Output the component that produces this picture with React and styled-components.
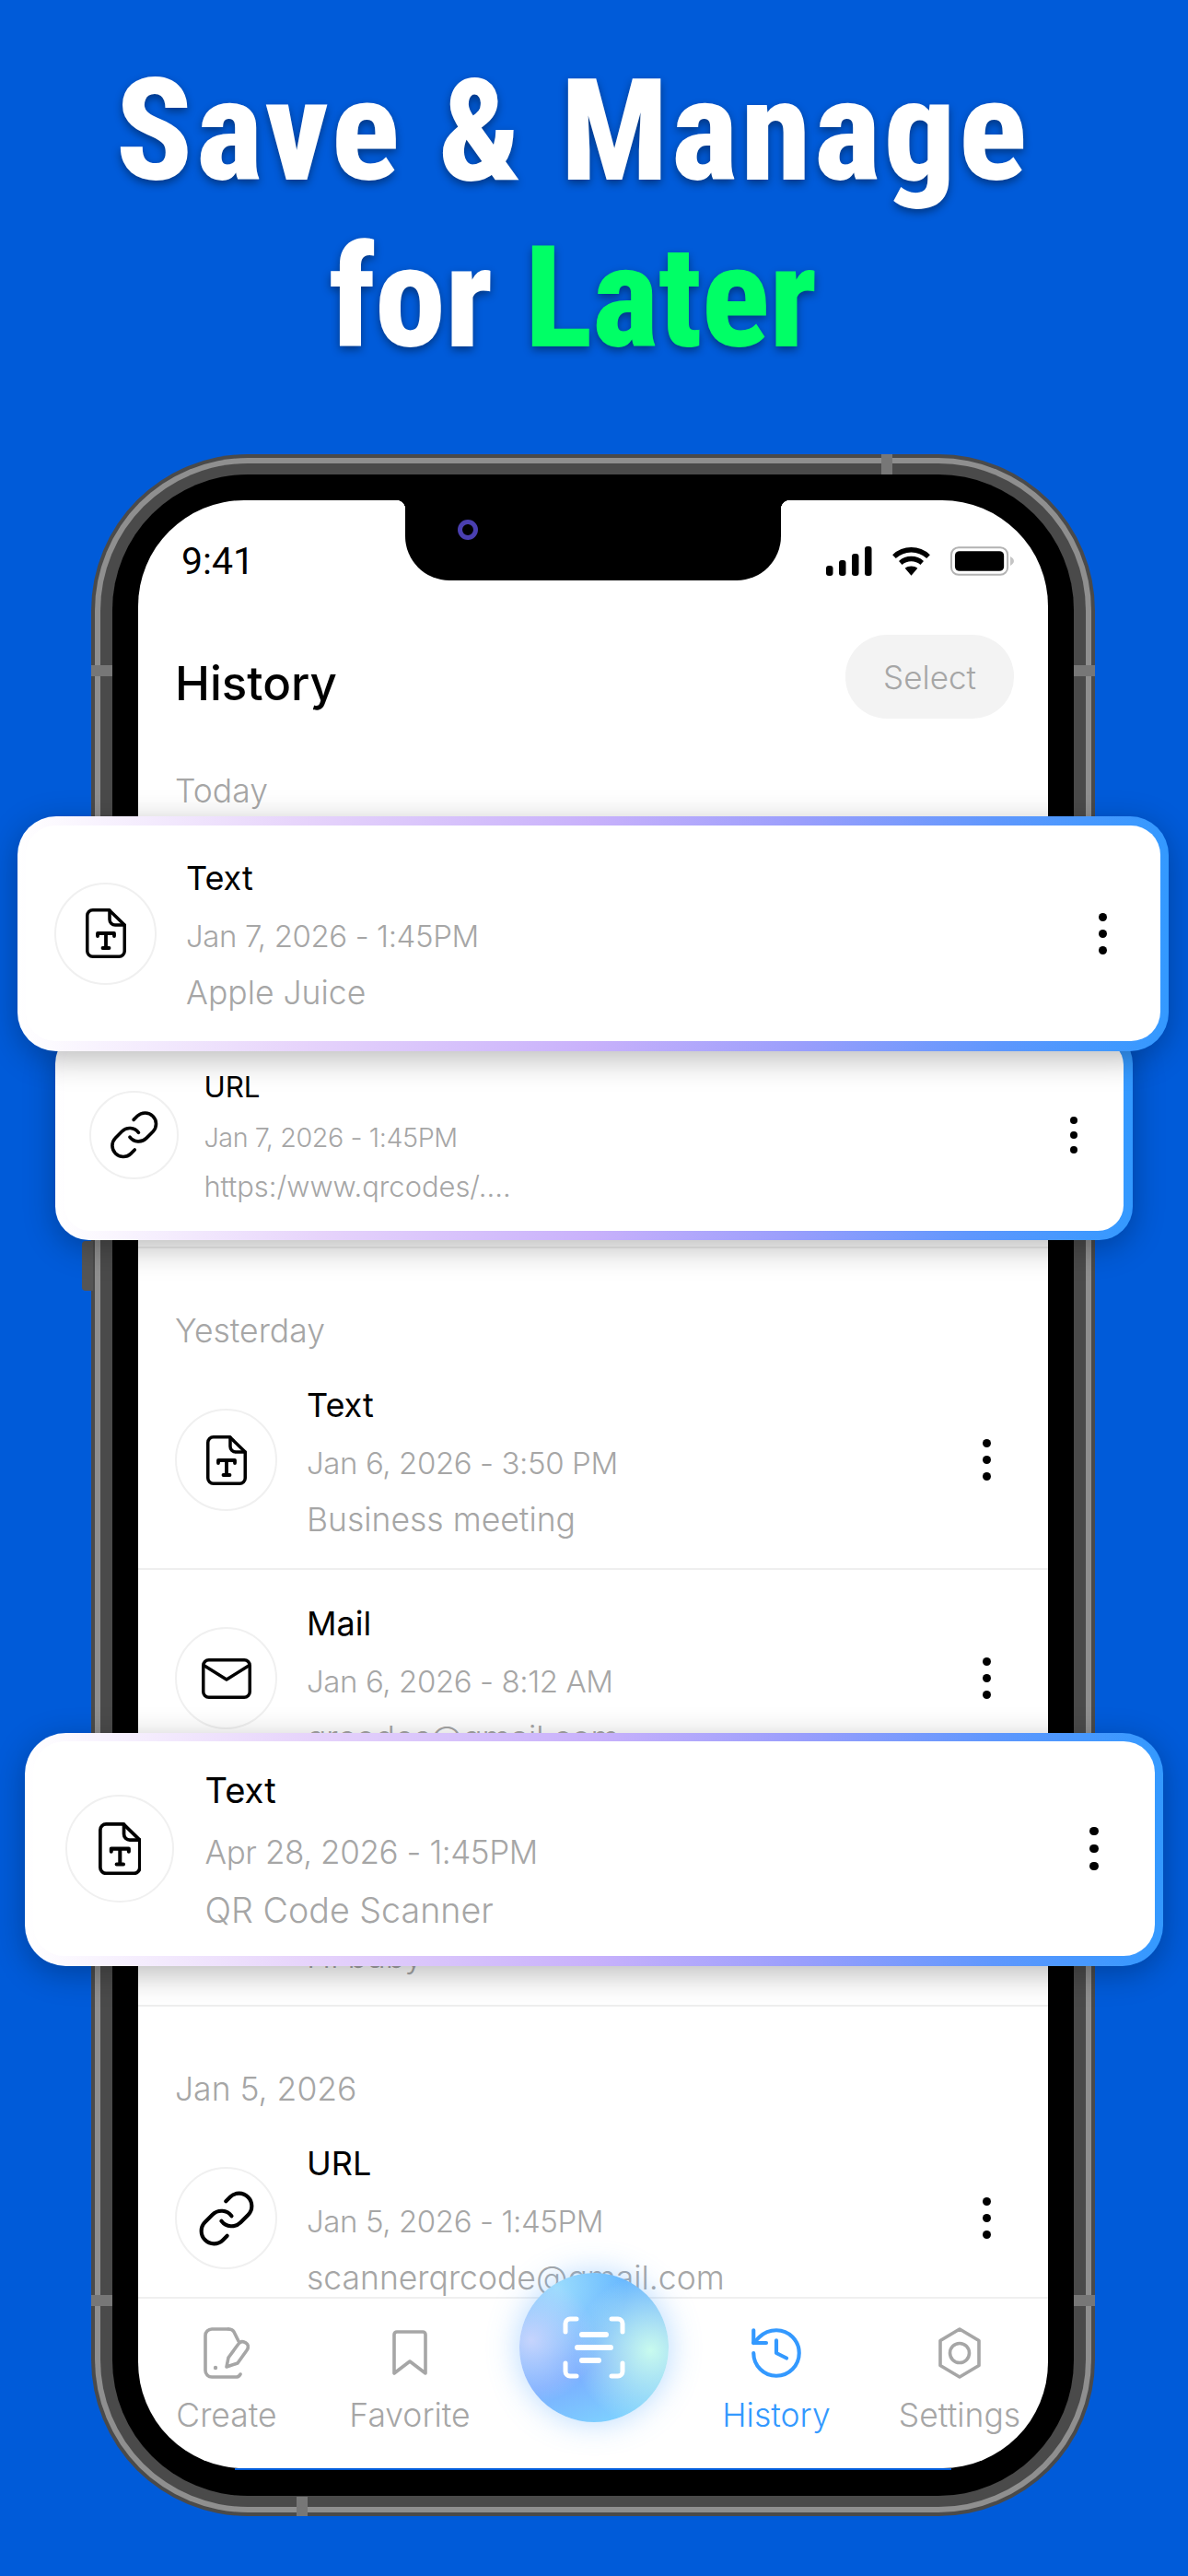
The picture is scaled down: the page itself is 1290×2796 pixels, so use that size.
import React from 'react';
import styled, { createGlobalStyle } from 'styled-components';
import { History, Link as LinkIcon } from 'lucide-react';

const BLUE = '#005bd9';
const GREY = '#a6a6a6';
const ACCENT = '#3399ff';
const BORDER_GRADIENT = 'linear-gradient(90deg, #fff 0%, #e6d3fb 25%, #c8b1fb 50%, #9a9efc 68%, #5f97fd 85%, #3399ff 100%)';

const GlobalStyle = createGlobalStyle`
	html, body {
		margin: 0;
		padding: 0;
		background: ${BLUE};
	}
	* {
		box-sizing: border-box;
	}
`;

const FileIcon = ({ s = 1 }) => (
	<svg width={44 * s} height={54 * s} viewBox="0 0 44 54" fill="none" stroke="#000" strokeWidth="3.5" strokeLinecap="round" strokeLinejoin="round">
		<path d="M8 1.750h17.500L42.250 18v28.250a6 6 0 0 1-6 6H7.750a6 6 0 0 1-6-6V7.750a6 6 0 0 1 6-6z" />
		<path d="M26 2v10a6 6 0 0 0 6 6h10" />
		<path d="M13 30v-3h18v3M22 27v16M18.500 43h7" strokeWidth="3.8" />
	</svg>
);

const MailIcon = ({ s = 1 }) => (
	<svg width={54 * s} height={44 * s} viewBox="0 0 54 44" fill="none" stroke="#000" strokeWidth="3.5" strokeLinecap="round" strokeLinejoin="round">
		<rect x="1.750" y="1.750" width="50.500" height="40.500" rx="6" />
		<path d="M3 8l24 15L51 8" />
	</svg>
);

const ChainIcon = ({ s = 1 }) => <LinkIcon size={66 * s} strokeWidth={1.5} color="#000" />;

const iconFor = { text: FileIcon, mail: MailIcon, url: ChainIcon };

const CreateIcon = () => (
	<svg width="50" height="56" viewBox="0 0 50 56" fill="none" stroke={GREY} strokeWidth="3.6" strokeLinecap="round" strokeLinejoin="round">
		<path d="M27 2H9a7 7 0 0 0-7 7v38a7 7 0 0 0 7 7h27a5 5 0 0 0 4-3" />
		<path d="M27 2c3 0 5 1 6 3l5 10" />
		<path d="M25 43l2-10 11-15c2-3 5-3 8-1s3 5 1 8L37 39z" />
		<path d="M13 44v.1" strokeWidth="4.4" />
	</svg>
);

const BookmarkIcon = () => (
	<svg width="38" height="50" viewBox="0 0 38 50" fill="none" stroke={GREY} strokeWidth="3.6" strokeLinejoin="round">
		<path d="M5 2h28a3 3 0 0 1 3 3v42L19 34 2 47V5a3 3 0 0 1 3-3z" />
	</svg>
);

const HexIcon = () => (
	<svg width="50" height="56" viewBox="0 0 50 56" fill="none" stroke={GREY} strokeWidth="3.6" strokeLinejoin="round">
		<path d="M25 2l21 12.500v27L25 54 4 41.500v-27z" />
		<circle cx="25" cy="28" r="10.500" />
	</svg>
);

const ScanIcon = () => (
	<svg width="68" height="68" viewBox="0 0 68 68" fill="none" stroke="#fff" strokeWidth="5" strokeLinecap="round" strokeLinejoin="round">
		<path d="M3 17V8a5 5 0 0 1 5-5h7M53 3h7a5 5 0 0 1 5 5v9M65 51v9a5 5 0 0 1-5 5h-7M15 65H8a5 5 0 0 1-5-5v-9" />
		<path d="M21 20h26M16 34h36M21 48h18" strokeWidth="6" />
	</svg>
);

const SignalIcon = () => (
	<svg width="50" height="32" viewBox="0 0 50 32" fill="#000">
		<rect x="0" y="21" width="7.500" height="11" rx="3" />
		<rect x="14" y="15" width="7.500" height="17" rx="3" />
		<rect x="28" y="8" width="7.500" height="24" rx="3" />
		<rect x="42" y="0" width="7.500" height="32" rx="3" />
	</svg>
);

const WifiIcon = () => (
	<svg width="43" height="32" viewBox="0 0 44 32" fill="none" stroke="#000" strokeWidth="5.500">
		<path d="M3 11c11-10 27-10 38 0" />
		<path d="M10 18c7-6 17-6 24 0" />
		<path d="M22 32l-7-8c4-3 10-3 14 0z" fill="#000" stroke="none" />
	</svg>
);

const BatteryIcon = () => (
	<svg width="69" height="32" viewBox="0 0 70 32">
		<rect x="1" y="1" width="62" height="30" rx="8" fill="none" stroke="#b3b3b3" strokeWidth="2" />
		<rect x="5" y="5" width="54" height="22" rx="5" fill="#000" />
		<path d="M66 11c2 1 4 3 4 5s-2 4-4 5z" fill="#c4c4c4" />
	</svg>
);

const Entry = ({ kind, title, date, sub, s = 1 }) => {
	const Icon = iconFor[kind];
	return (
		<>
			<IconCircle $s={s}>
				<Icon s={s} />
			</IconCircle>
			<EntryText $s={s}>
				<EntryTitle $s={s}>{title}</EntryTitle>
				<EntryDate $s={s}>{date}</EntryDate>
				<EntrySub $s={s}>{sub}</EntrySub>
			</EntryText>
			<Kebab $s={s}>
				<i />
				<i />
				<i />
			</Kebab>
		</>
	);
};

const SECTIONS = [
	{
		label: 'Today',
		rows: [
			{ kind: 'text', title: 'Text', date: 'Jan 7, 2026 - 1:45PM', sub: 'Apple Juice' },
			{ kind: 'url', title: 'URL', date: 'Jan 7, 2026 - 1:45PM', sub: 'https:/www.qrcodes/....' },
		],
	},
	{
		label: 'Yesterday',
		rows: [
			{ kind: 'text', title: 'Text', date: 'Jan 6, 2026 - 3:50 PM', sub: 'Business meeting' },
			{ kind: 'mail', title: 'Mail', date: 'Jan 6, 2026 - 8:12 AM', sub: 'qrcodes@gmail.com' },
			{ kind: 'text', title: 'Text', date: 'Jan 6, 2026 - 6:30 AM', sub: 'Hi baby' },
		],
	},
	{
		label: 'Jan 5, 2026',
		rows: [{ kind: 'url', title: 'URL', date: 'Jan 5, 2026 - 1:45PM', sub: 'scannerqrcode@gmail.com' }],
	},
];

const TABS = [
	{ label: 'Create', icon: <CreateIcon /> },
	{ label: 'Favorite', icon: <BookmarkIcon /> },
	{ label: '', icon: null },
	{ label: 'History', icon: <History size={66} strokeWidth={1.5} color={ACCENT} />, active: true },
	{ label: 'Settings', icon: <HexIcon /> },
];

export default function App() {
	return (
		<Page>
			<GlobalStyle />
			<Headline>
				<HeadLine $spacing={3.4}>Save &amp; Manage</HeadLine>
				<HeadLine $spacing={-0.5}>
					for <Green>Later</Green>
				</HeadLine>
			</Headline>
			<Stage>
				<SideButton />
				<Shell>
					<Stripe>
						<Rim>
							<Bezel>
								<Screen>
									<Notch>
										<Camera />
									</Notch>
									<StatusBar>
										<Clock>9:41</Clock>
										<StatusIcons>
											<SignalIcon />
											<WifiIcon />
											<BatteryIcon />
										</StatusIcons>
									</StatusBar>
									<TitleRow>
										<PageTitle>History</PageTitle>
										<SelectButton>Select</SelectButton>
									</TitleRow>
									<List>
										{SECTIONS.map(section => (
											<Section key={section.label}>
												<SectionLabel>{section.label}</SectionLabel>
												{section.rows.map((row, i) => (
													<Row key={i}>
														<Entry {...row} />
													</Row>
												))}
											</Section>
										))}
									</List>
									<TabBar>
										{TABS.map((tab, i) => (
											<Tab key={i} $active={tab.active}>
												<TabIcon>{tab.icon}</TabIcon>
												{tab.label}
											</Tab>
										))}
										<ScanButton>
											<ScanIcon />
										</ScanButton>
									</TabBar>
								</Screen>
							</Bezel>
						</Rim>
					</Stripe>
				</Shell>
				<FrameMark $x={858} $y={0} $w={12} $h={22} />
				<FrameMark $x={0} $y={229} $w={23} $h={12} />
				<FrameMark $x={1067} $y={229} $w={23} $h={12} />
				<FrameMark $x={0} $y={1998} $w={23} $h={12} />
				<FrameMark $x={1067} $y={1998} $w={23} $h={12} />
				<FrameMark $x={223} $y={2217} $w={12} $h={21} />

				<FloatCard $left={-39} $top={625} $width={1170} $height={228} $pad="10px" $s={0.87}>
					<CardInner $s={0.87} $left={27}>
						<Entry kind="url" title="URL" date="Jan 7, 2026 - 1:45PM" sub="https:/www.qrcodes/...." s={0.87} />
					</CardInner>
				</FloatCard>
				<FloatCard $left={-80} $top={393} $width={1250} $height={255} $pad="10px 9px 11px 9px" $s={1}>
					<CardInner $s={1} $left={31}>
						<Entry kind="text" title="Text" date="Jan 7, 2026 - 1:45PM" sub="Apple Juice" />
					</CardInner>
				</FloatCard>
				<FloatCard $left={-72} $top={1388} $width={1236} $height={253} $pad="9px 9px 11px 9px" $s={1.06}>
					<CardInner $s={1.06} $left={35}>
						<Entry kind="text" title="Text" date="Apr 28, 2026 - 1:45PM" sub="QR Code Scanner" s={1.06} />
					</CardInner>
				</FloatCard>
			</Stage>
		</Page>
	);
}

const Page = styled.div`
	width: 1290px;
	height: 2796px;
	overflow: hidden;
	background: ${BLUE};
	font-family: 'Inter', 'Liberation Sans', sans-serif;
`;

const Headline = styled.h1`
	margin: 0;
	height: 493px;
	padding: 52px 46px 0 0;
	display: flex;
	flex-direction: column;
	align-items: center;
	font-family: 'Roboto', 'Liberation Sans', sans-serif;
	font-stretch: 75%;
	font-weight: 800;
	font-size: 154px;
	line-height: 181px;
	color: #fff;
	text-shadow: 0 4px 10px rgba(0, 0, 0, 0.4);
	white-space: nowrap;
`;

const HeadLine = styled.span`
	letter-spacing: ${p => p.$spacing}px;
`;

const Green = styled.span`
	color: #00ff66;
`;

const Stage = styled.div`
	position: relative;
	width: 1090px;
	margin-left: 99px;
`;

const SideButton = styled.div`
	position: absolute;
	left: -10px;
	top: 854px;
	width: 12px;
	height: 54px;
	border-radius: 4px 0 0 4px;
	background: #555;
`;

const Shell = styled.div`
	height: 2238px;
	padding: 4px;
	border-radius: 170px;
	background: #4a4a4a;
`;

const Stripe = styled.div`
	height: 100%;
	padding: 6px;
	border-radius: 166px;
	background: #8f8f8f;
`;

const Rim = styled.div`
	height: 100%;
	padding: 12px 13px;
	border-radius: 160px;
	background: #4a4a4a;
`;

const Bezel = styled.div`
	height: 100%;
	padding: 28px 28px 30px;
	border-radius: 147px;
	background: #000;
`;

const Screen = styled.div`
	position: relative;
	height: 100%;
	display: flex;
	flex-direction: column;
	border-radius: 115px;
	background: #fff;

	&::after {
		content: '';
		position: absolute;
		left: 105px;
		right: 105px;
		bottom: -2px;
		height: 2px;
		background: ${BLUE};
	}
`;

const Notch = styled.div`
	position: absolute;
	top: 0;
	left: 50%;
	width: 408px;
	height: 87px;
	margin-left: -204px;
	border-radius: 0 0 48px 48px;
	background: #000;

	&::before,
	&::after {
		content: '';
		position: absolute;
		top: 0;
		width: 10px;
		height: 10px;
	}
	&::before {
		left: -10px;
		background: radial-gradient(circle at 0 100%, transparent 10px, #000 10.5px);
	}
	&::after {
		right: -10px;
		background: radial-gradient(circle at 100% 100%, transparent 10px, #000 10.5px);
	}
`;

const Camera = styled.div`
	position: absolute;
	left: 57px;
	top: 21px;
	width: 22px;
	height: 22px;
	border: 5px solid #4a3fb0;
	border-radius: 50%;
	background: #000;
`;

const StatusBar = styled.div`
	display: flex;
	align-items: center;
	justify-content: space-between;
	height: 40px;
	margin-top: 46px;
	padding: 0 37px 0 47px;
`;

const Clock = styled.span`
	font-family: 'Roboto', 'Liberation Sans', sans-serif;
	font-size: 41px;
	color: #000;
`;

const StatusIcons = styled.div`
	display: flex;
	align-items: center;
	gap: 21px;
`;

const TitleRow = styled.div`
	display: flex;
	align-items: center;
	justify-content: space-between;
	height: 91px;
	margin-top: 60px;
	padding: 0 37px 0 40px;
`;

const PageTitle = styled.h2`
	margin: 0;
	padding-top: 14px;
	font-size: 51px;
	font-weight: 500;
	color: #000;
`;

const SelectButton = styled.div`
	display: flex;
	align-items: center;
	justify-content: center;
	width: 183px;
	height: 91px;
	border-radius: 45px;
	background: #f3f3f3;
	font-size: 35px;
	font-weight: 300;
	color: ${GREY};
`;

const List = styled.div`
	flex: 1;
	min-height: 0;
	overflow: hidden;
	padding-top: 53px;
`;

const Section = styled.section`
	& + & {
		margin-top: 64px;
	}
`;

const SectionLabel = styled.div`
	height: 48px;
	padding-left: 40px;
	font-size: 35.5px;
	font-weight: 300;
	line-height: 51px;
	color: ${GREY};
`;

const Row = styled.div`
	display: flex;
	align-items: center;
	height: 237px;
	padding: 0 62px 0 40px;
	border-bottom: 2px solid #efefef;
`;

const IconCircle = styled.div`
	flex: none;
	display: flex;
	align-items: center;
	justify-content: center;
	width: ${p => 111 * p.$s}px;
	height: ${p => 111 * p.$s}px;
	border: 2px solid #f0f0f0;
	border-radius: 50%;
`;

const EntryText = styled.div`
	flex: 1;
	margin-left: ${p => 32 * p.$s}px;
	padding-top: ${p => 5 * p.$s}px;
	white-space: nowrap;
`;

const EntryTitle = styled.div`
	font-size: ${p => 36 * p.$s}px;
	line-height: ${p => 63 * p.$s}px;
	color: #000;
`;

const EntryDate = styled.div`
	font-size: ${p => 33 * p.$s}px;
	font-weight: 300;
	line-height: ${p => 63 * p.$s}px;
	letter-spacing: -0.4px;
	color: ${GREY};
`;

const EntrySub = styled.div`
	margin-top: ${p => -2 * p.$s}px;
	font-size: ${p => 35.5 * p.$s}px;
	font-weight: 300;
	line-height: ${p => 63 * p.$s}px;
	color: ${GREY};
`;

const Kebab = styled.div`
	flex: none;
	display: flex;
	flex-direction: column;
	gap: ${p => 9 * p.$s}px;

	i {
		display: block;
		width: ${p => 9 * p.$s}px;
		height: ${p => 9 * p.$s}px;
		border-radius: 50%;
		background: #000;
	}
`;

const TabBar = styled.nav`
	position: relative;
	flex: none;
	display: grid;
	grid-template-columns: repeat(5, 199px);
	justify-content: center;
	height: 186px;
	border-top: 2px solid #efefef;
	border-radius: 0 0 115px 115px;
`;

const Tab = styled.div`
	display: flex;
	flex-direction: column;
	align-items: center;
	font-size: 35.5px;
	font-weight: 300;
	line-height: 50px;
	color: ${p => (p.$active ? ACCENT : GREY)};
`;

const TabIcon = styled.div`
	display: flex;
	align-items: center;
	justify-content: center;
	height: 66px;
	margin: 26px 0 10px;
`;

const ScanButton = styled.button`
	position: absolute;
	left: 414px;
	top: -28px;
	width: 162px;
	height: 162px;
	display: flex;
	align-items: center;
	justify-content: center;
	padding: 0;
	border: 0;
	border-radius: 50%;
	background:
		radial-gradient(circle at 88% 52%, #c8fbee 0, rgba(200, 251, 238, 0) 50%),
		radial-gradient(circle at 8% 45%, #c6d4fd 0, rgba(198, 212, 253, 0) 40%),
		radial-gradient(circle at 25% 10%, #9bdcfd 0, rgba(155, 220, 253, 0) 40%),
		linear-gradient(160deg, #66b8ff 20%, #7aaeff 60%, #7fdcff 100%);
	box-shadow: 0 0 34px rgba(90, 170, 255, 0.45);
`;

const FrameMark = styled.div`
	position: absolute;
	left: ${p => p.$x}px;
	top: ${p => p.$y}px;
	width: ${p => p.$w}px;
	height: ${p => p.$h}px;
	background: #777;
`;

const FloatCard = styled.div`
	position: absolute;
	left: ${p => p.$left}px;
	top: ${p => p.$top}px;
	width: ${p => p.$width}px;
	height: ${p => p.$height}px;
	padding: ${p => p.$pad};
	border-radius: ${p => 42 * p.$s}px;
	background: ${BORDER_GRADIENT};
	box-shadow: 0 8px 34px rgba(0, 0, 0, 0.28);
`;

const CardInner = styled.div`
	display: flex;
	align-items: center;
	height: 100%;
	padding: 0 ${p => 58 * p.$s}px 0 ${p => p.$left}px;
	border-radius: ${p => 32 * p.$s}px;
	background: #fff;
`;
